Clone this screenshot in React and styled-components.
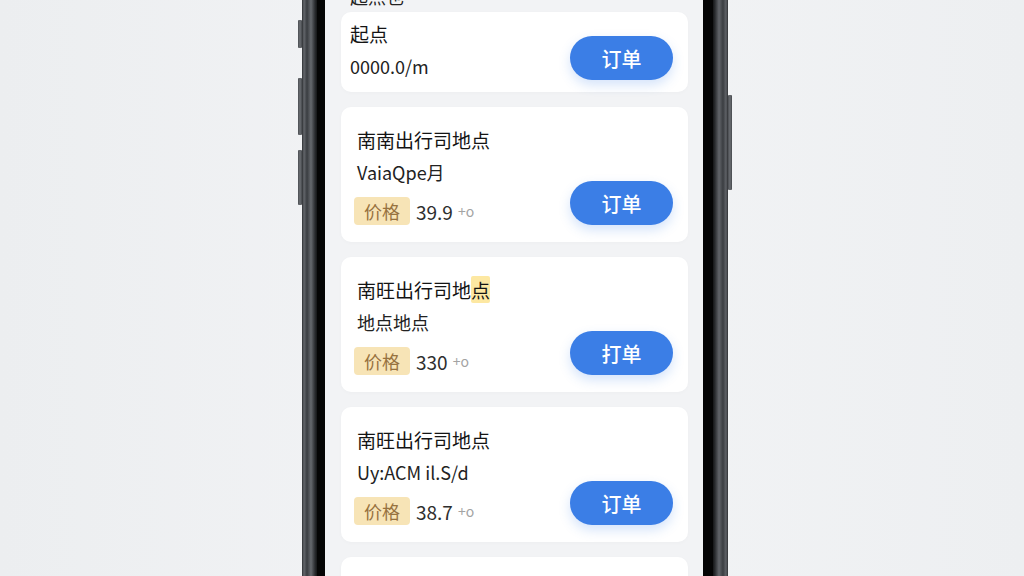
import React from 'react';
import styled, { createGlobalStyle } from 'styled-components';

const GlobalStyle = createGlobalStyle`
    html, body {
        margin: 0;
        padding: 0;
        height: 576px;
        overflow: hidden;
        background: #eef0f2;
        font-family: "Noto Sans CJK SC", "Noto Sans", sans-serif;
    }
`;

const orders = [
    { title: '南南出行司地点', sub: 'VaiaQpe月', price: '39.9', action: '订单' },
    { title: '南旺出行司地', mark: '点', sub: '地点地点', price: '330', action: '打单' },
    { title: '南旺出行司地点', sub: 'Uy:ACM il.S/d', price: '38.7', action: '订单' },
];

export default function App(){
    return(
        <Page>
            <GlobalStyle />
            <Phone>
                <SideKey $side="left" $top={20} $h={28} />
                <SideKey $side="left" $top={78} $h={57} />
                <SideKey $side="left" $top={150} $h={55} />
                <SideKey $side="right" $top={95} $h={95} />
                <Bezel>
                    <Screen>
                        <List>
                            <Header>起点也</Header>
                            <Card $compact>
                                <Info $compact>
                                    <Title>起点</Title>
                                    <Sub>0000.0/m</Sub>
                                </Info>
                                <OrderButton>订单</OrderButton>
                            </Card>
                            {orders.map((o, i) => (
                                <Card key={i}>
                                    <Info>
                                        <Title>{o.title}{o.mark && <Mark>{o.mark}</Mark>}</Title>
                                        <Sub>{o.sub}</Sub>
                                        <PriceRow>
                                            <Badge>价格</Badge>
                                            <Price>{o.price}</Price>
                                            <Unit>+o</Unit>
                                        </PriceRow>
                                    </Info>
                                    <OrderButton>{o.action}</OrderButton>
                                </Card>
                            ))}
                            {/* next card, its content is below the fold */}
                            <Card $empty />
                        </List>
                    </Screen>
                </Bezel>
            </Phone>
        </Page>
    )
}

const Page = styled.div`
    height: 576px;
    display: flex;
    justify-content: center;
    background: linear-gradient(90deg, #eceef0 0%, #f3f4f6 50%, #edeff1 100%);
`;

const Phone = styled.div`
    position: relative;
    width: 426px;
    height: 576px;
    margin-left: 6px;
    padding: 0 15px;
    box-sizing: border-box;
    background:
        linear-gradient(90deg, #2e3033 0, #63666b 2px, #3a3d41 5px, #66696e 9px, #2a2c2f 13px, #151617 15px) left / 15px 100% no-repeat,
        linear-gradient(90deg, #151617 0, #2a2c2f 2px, #62656a 6px, #3a3d41 10px, #5f6267 13px, #2e3033 15px) right / 15px 100% no-repeat,
        #111;
`;

const SideKey = styled.div`
    position: absolute;
    top: ${p => p.$top}px;
    height: ${p => p.$h}px;
    width: 4px;
    ${p => p.$side === 'left' ? 'left: -4px;' : 'right: -4px;'}
    background: linear-gradient(90deg, #4a4d51, #6b6e73, #45484c);
    border-radius: 1px;
`;

const Bezel = styled.div`
    height: 100%;
    padding: 0 10px 0 8px;
    background: #050505;
`;

const Screen = styled.div`
    height: 100%;
    background: #f2f3f5;
    overflow: hidden;
`;

const List = styled.div`
    display: flex;
    flex-direction: column;
    gap: 15px;
    margin-top: -16px;
`;

const Header = styled.div`
    padding-left: 25px;
    font-size: 18px;
    line-height: 24px;
    color: #222;
    margin-bottom: -11px;
`;

const Card = styled.div`
    display: flex;
    align-items: flex-end;
    justify-content: space-between;
    min-height: ${p => p.$empty ? '60px' : 'auto'};
    margin: 0 15px 0 16px;
    padding: ${p => p.$compact ? '10px 15px 12px 9px' : '21px 15px 17px 16px'};
    background: #fff;
    border-radius: 10px;
    box-shadow: 0 1px 4px rgba(0, 0, 0, 0.025);
`;

const Info = styled.div`
    display: flex;
    flex-direction: column;
    gap: 9px;
    padding-bottom: ${p => p.$compact ? '3px' : '0'};
`;

const Title = styled.div`
    font-size: 19px;
    line-height: 24px;
    color: #141414;
`;

const Mark = styled.span`
    background: #fde8a2;
    border-radius: 2px;
`;

const Sub = styled.div`
    font-size: 18px;
    line-height: 22px;
    color: #222;
`;

const PriceRow = styled.div`
    display: flex;
    align-items: center;
    margin-top: 5px;
`;

const Badge = styled.span`
    height: 28px;
    line-height: 28px;
    padding: 0 10px;
    margin-left: -3px;
    font-size: 18px;
    color: #97723f;
    background: #f7e4b6;
    border-radius: 4px;
`;

const Price = styled.span`
    margin-left: 6px;
    font-size: 19px;
    color: #2e2e2e;
`;

const Unit = styled.span`
    margin-left: 5px;
    font-size: 14px;
    color: #a3a3a3;
`;

const OrderButton = styled.button`
    width: 103px;
    height: 44px;
    border: none;
    border-radius: 22px;
    background: #3b7ee6;
    color: #fff;
    font-family: "Noto Sans CJK SC", sans-serif;
    font-size: 20px;
    font-weight: 500;
    box-shadow: 0 5px 12px rgba(59, 126, 230, 0.22);
    cursor: pointer;
`;
